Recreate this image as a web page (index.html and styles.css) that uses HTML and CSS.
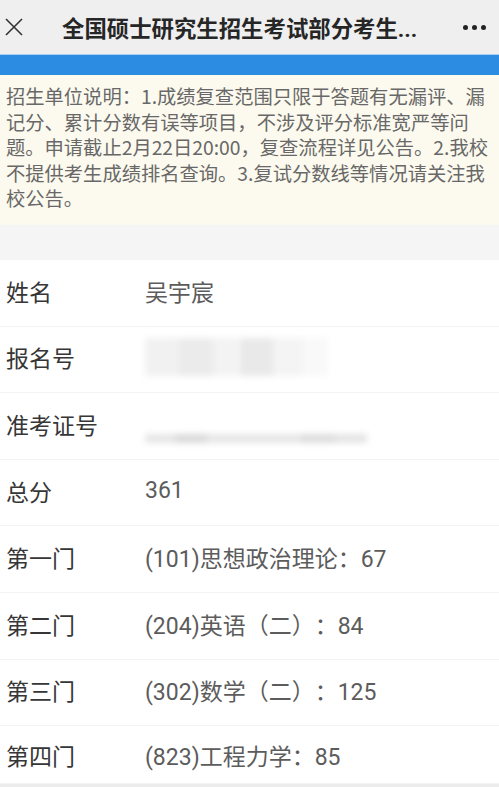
FILE: index.html
```html
<!DOCTYPE html>
<html>
<head>
  <meta charset="utf-8">
  <title>全国硕士研究生招生考试部分考生成绩查询</title>
  <link rel="stylesheet" href="styles.css">
</head>
<body>
  <div class="topbar">
    <span class="close">
      <svg width="18" height="18" viewBox="0 0 18 18">
        <path d="M1 1 L17 17 M17 1 L1 17" stroke="#333" stroke-width="1.6" fill="none"/>
      </svg>
    </span>
    <h1 class="title">全国硕士研究生招生考试部分考生...</h1>
    <span class="more"><i></i><i></i><i></i></span>
  </div>
  <div class="progress"></div>

  <p class="notice">招生单位说明：1.成绩复查范围只限于答题有无漏评、漏记分、累计分数有误等项目，不涉及评分标准宽严等问题。申请截止2月22日20:00，复查流程详见公告。2.我校不提供考生成绩排名查询。3.复试分数线等情况请关注我校公告。</p>

  <div class="gap"></div>

  <ul class="info">
    <li class="row"><span class="label">姓名</span><span class="value">吴宇宸</span></li>
    <li class="row"><span class="label">报名号</span>
      <span class="value"><span class="mask mask-id"><i></i><i></i><i></i><i></i><i></i><i></i></span></span>
    </li>
    <li class="row"><span class="label">准考证号</span>
      <span class="value"><span class="mask mask-no"><i></i><i></i><i></i><i></i><i></i></span></span>
    </li>
    <li class="row"><span class="label">总分</span><span class="value">361</span></li>
    <li class="row"><span class="label">第一门</span><span class="value">(101)思想政治理论：67</span></li>
    <li class="row"><span class="label">第二门</span><span class="value">(204)英语（二）：84</span></li>
    <li class="row"><span class="label">第三门</span><span class="value">(302)数学（二）：125</span></li>
    <li class="row"><span class="label">第四门</span><span class="value">(823)工程力学：85</span></li>
  </ul>
</body>
</html>
```

FILE: styles.css
```css
body {
  margin: 0;
  padding: 0;
  background-color: #ececec;
  font-family: Roboto, "Noto Sans CJK SC", sans-serif;
  text-spacing-trim: space-all;
  overflow: hidden;
}

.topbar {
  display: flex;
  align-items: center;
  height: 54px;
  background-color: #efefef;
}

.close {
  display: flex;
  width: 18px;
  margin-left: 5px;
}

.title {
  flex: 1;
  margin: 0 0 0 39px;
  font-size: 22.4px;
  font-weight: bold;
  color: #262626;
  white-space: nowrap;
}

.more {
  display: flex;
  gap: 4px;
  margin-right: 13px;
}

.more i {
  width: 5px;
  height: 5px;
  border-radius: 50%;
  background-color: #222;
}

.progress {
  height: 20px;
  border-top: 1px solid #a9d0f2;
  background-color: #2c8ce2;
}

.notice {
  margin: 0;
  padding: 9px 4px 13px 6px;
  background-color: #fcfaee;
  color: #686868;
  font-family: "Noto Sans CJK SC", sans-serif;
  font-size: 19.3px;
  line-height: 25.6px;
}

.gap {
  height: 35px;
  background-color: #f5f5f5;
}

.info {
  list-style: none;
  margin: 0;
  padding: 0;
  background-color: #fff;
}

.row {
  display: flex;
  align-items: center;
  box-sizing: border-box;
  height: 66.6px;
  padding: 0 0 4px 6px;
  border-bottom: 1px solid #f3f3f3;
}

.row:last-child {
  height: 58px;
  padding-bottom: 0;
}

.label {
  width: 139px;
  font-size: 23px;
  color: #363636;
}

.value {
  font-size: 23px;
  color: #5c5c5c;
}

/* blurred-out personal numbers */
.mask {
  display: flex;
  filter: blur(3px);
}

.mask-id {
  height: 38px;
  width: 183px;
}

.mask-id i:nth-child(1) { width: 34px; background-color: #f1f1f1; }
.mask-id i:nth-child(2) { width: 34px; background-color: #ebebeb; }
.mask-id i:nth-child(3) { width: 28px; background-color: #f3f3f3; }
.mask-id i:nth-child(4) { width: 32px; background-color: #e9e9e9; }
.mask-id i:nth-child(5) { width: 30px; background-color: #f4f4f4; }
.mask-id i:nth-child(6) { width: 25px; background-color: #f9f9f9; }

.mask-no {
  height: 9px;
  width: 222px;
  margin-top: 30px;
}

.mask-no i:nth-child(1) { width: 30px; background-color: #e6e6e6; }
.mask-no i:nth-child(2) { width: 32px; background-color: #d9d9d9; }
.mask-no i:nth-child(3) { width: 94px; background-color: #e6e6e6; }
.mask-no i:nth-child(4) { width: 34px; background-color: #dcdcdc; }
.mask-no i:nth-child(5) { width: 32px; background-color: #e4e4e4; }
```
